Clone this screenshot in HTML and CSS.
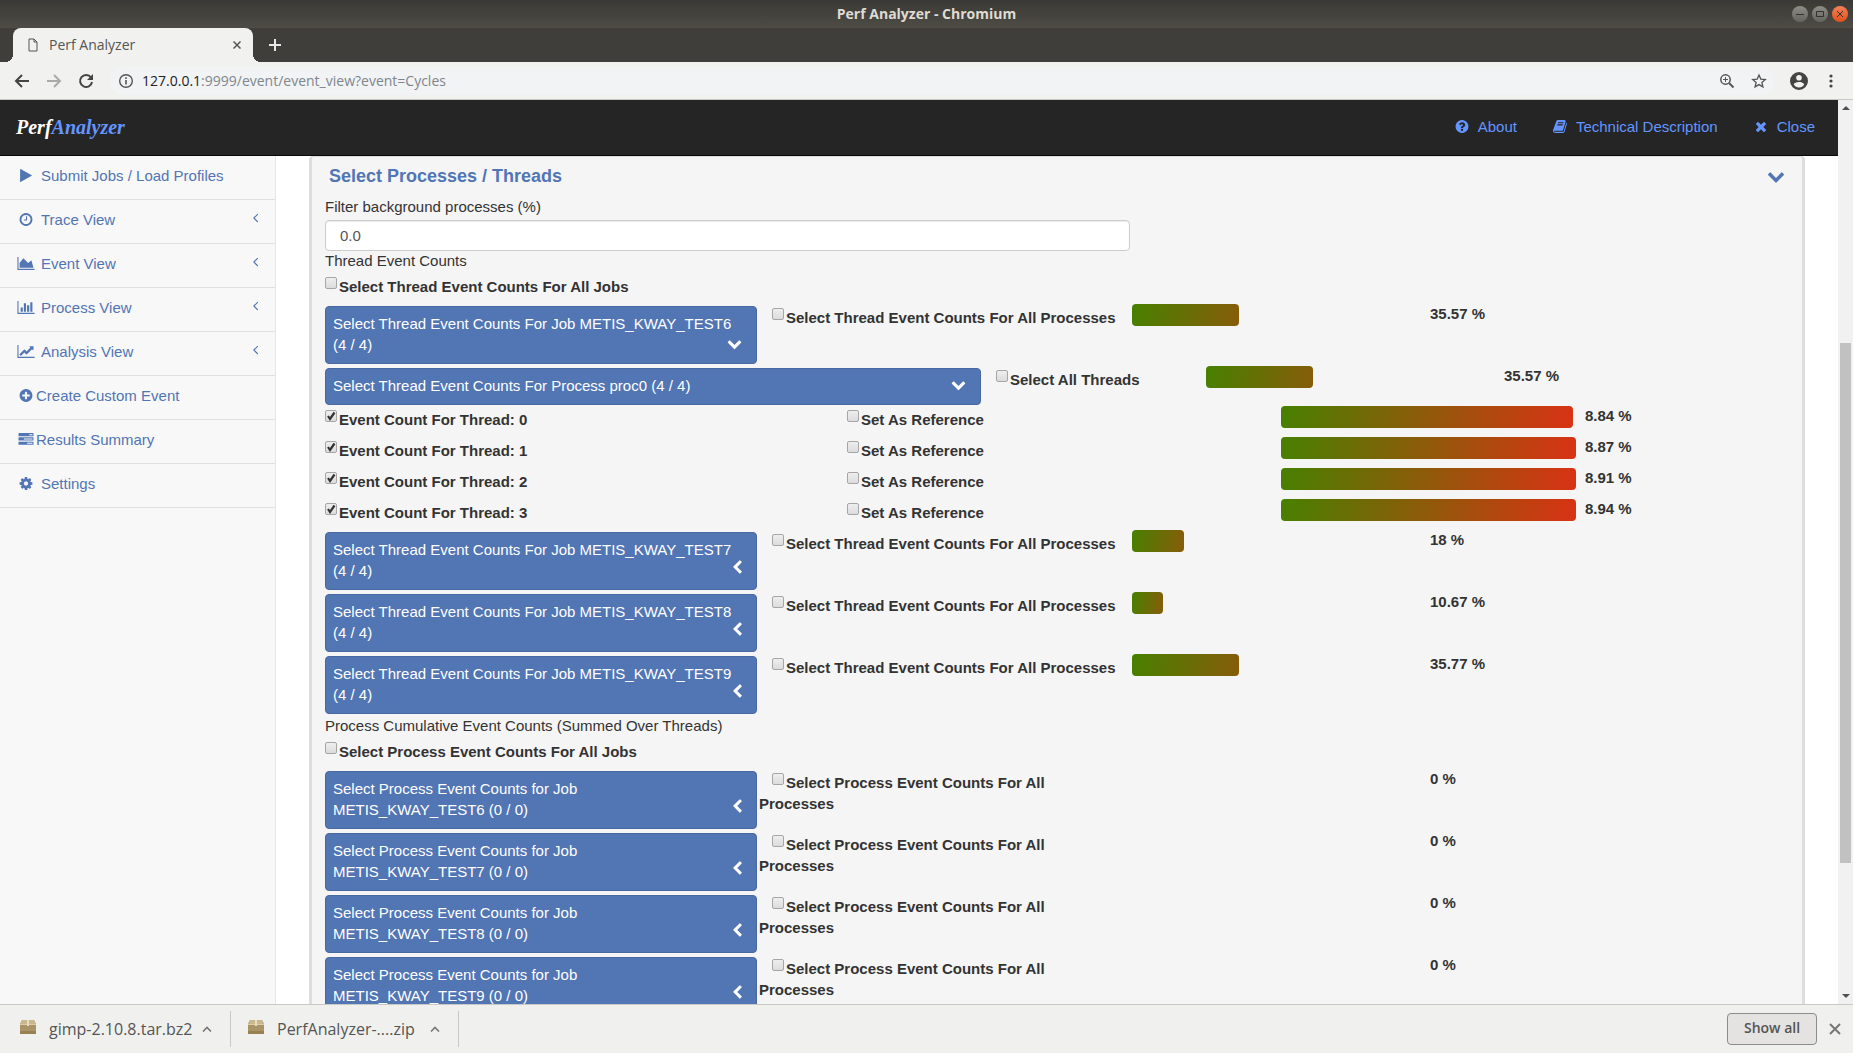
FILE: index.html
```html
<!DOCTYPE html>
<html lang="en">
<head>
<meta charset="utf-8">
<title>Perf Analyzer</title>
<link rel="stylesheet" href="styles.css">
</head>
<body>
<svg class="sprite" aria-hidden="true">
  <symbol id="play" viewBox="0 0 1792 1792"><path d="M1576 927l-1328 738q-23 13-39.500 3t-16.500-36v-1472q0-26 16.500-36t39.500 3l1328 738q23 13 23 31t-23 31z"/></symbol>
  <symbol id="question" viewBox="0 0 1792 1792"><path d="M1024 1376v-192q0-14-9-23t-23-9h-192q-14 0-23 9t-9 23v192q0 14 9 23t23 9h192q14 0 23-9t9-23zm256-672q0-88-55.500-163t-138.500-116-170-41q-243 0-371 213-15 24 8 42l132 100q7 6 19 6 16 0 25-12 53-68 86-92 34-24 86-24 48 0 85.500 26t37.500 59q0 38-20 61t-68 45q-63 28-115.500 86.500t-52.500 125.500v36q0 14 9 23t23 9h192q14 0 23-9t9-23q0-19 21.500-49.500t54.500-49.500q32-18 49-28.500t46-35 44.500-48 28-60.500 12.500-81zm384 192q0 209-103 385.500t-279.500 279.500-385.500 103-385.500-103-279.500-279.500-103-385.500 103-385.500 279.500-279.500 385.500-103 385.500 103 279.500 279.500 103 385.500z"/></symbol>
  <symbol id="plus" viewBox="0 0 1792 1792"><path d="M1344 960v-128q0-26-19-45t-45-19h-256v-256q0-26-19-45t-45-19h-128q-26 0-45 19t-19 45v256h-256q-26 0-45 19t-19 45v128q0 26 19 45t45 19h256v256q0 26 19 45t45 19h128q26 0 45-19t19-45v-256h256q26 0 45-19t19-45zm320-64q0 209-103 385.500t-279.500 279.500-385.500 103-385.500-103-279.500-279.500-103-385.500 103-385.500 279.500-279.500 385.500-103 385.500 103 279.500 279.500 103 385.500z"/></symbol>
  <symbol id="clock" viewBox="0 0 1792 1792"><path d="M1024 544v448q0 14-9 23t-23 9h-320q-14 0-23-9t-9-23v-64q0-14 9-23t23-9h224v-352q0-14 9-23t23-9h64q14 0 23 9t9 23zm416 352q0-148-73-273t-198-198-273-73-273 73-198 198-73 273 73 273 198 198 273 73 273-73 198-198 73-273zm224 0q0 209-103 385.500t-279.500 279.500-385.500 103-385.500-103-279.500-279.500-103-385.500 103-385.500 279.500-279.500 385.500-103 385.500 103 279.500 279.500 103 385.500z"/></symbol>
  <symbol id="cog" viewBox="0 0 1792 1792"><path d="M1152 896q0-106-75-181t-181-75-181 75-75 181 75 181 181 75 181-75 75-181zm512-109v222q0 12-8 23t-20 13l-185 28q-19 54-39 91 35 50 107 138 10 12 10 25t-9 23q-27 37-99 108t-94 71q-12 0-26-9l-138-108q-44 23-91 38-16 136-29 186-7 28-36 28h-222q-14 0-24.500-8.500t-11.500-21.500l-28-184q-49-16-90-37l-141 107q-10 9-25 9-14 0-25-11-126-114-165-168-7-10-7-23 0-12 8-23 15-21 51-66.500t54-70.500q-27-50-41-99l-183-27q-13-2-21-12.500t-8-23.500v-222q0-12 8-23t19-13l186-28q14-46 39-92-40-57-107-138-10-12-10-24 0-10 9-23 26-36 98.500-107.500t94.500-71.500q13 0 26 10l138 107q44-23 91-38 16-136 29-186 7-28 36-28h222q14 0 24.500 8.500t11.500 21.500l28 184q49 16 90 37l142-107q9-9 24-9 13 0 25 10 129 119 165 170 7 8 7 22 0 12-8 23-15 21-51 66.500t-54 70.500q26 50 41 98l183 28q13 2 21 12.500t8 23.500z"/></symbol>
  <symbol id="times" viewBox="0 0 1792 1792"><path d="M1490 1322q0 40-28 68l-136 136q-28 28-68 28t-68-28l-294-294-294 294q-28 28-68 28t-68-28l-136-136q-28-28-28-68t28-68l294-294-294-294q-28-28-28-68t28-68l136-136q28-28 68-28t68 28l294 294 294-294q28-28 68-28t68 28l136 136q28 28 28 68t-28 68l-294 294 294 294q28 28 28 68z"/></symbol>
  <symbol id="book" viewBox="0 0 1792 1792"><path d="M1703 478q40 57 18 129l-275 906q-19 64-76.500 107.500t-122.500 43.500h-923q-77 0-148.500-53.500t-99.500-131.500q-24-67-2-127 0-4 3-27t4-37q1-8-3-21.500t-3-19.500q2-11 8-21t16.500-23.500 16.500-23.500q23-38 45-91.500t30-91.500q3-10 .5-30t-.5-28q3-11 17-28t17-23q21-36 42-92t25-90q1-9-2.500-32t.5-28q4-13 22-30.500t22-22.500q19-26 42.500-84.500t27.500-96.500q1-8-3-25.500t-2-26.500q2-8 9-18t18-23 17-21q8-12 16.500-30.500t15-35 16-36 19.500-32 26.500-23.500 36-11.500 47.500 5.500l-1 3q38-9 51-9h761q74 0 114 56t18 130l-274 906q-36 119-71.500 153.500t-128.500 34.500h-869q-27 0-38 15-11 16-1 43 24 70 144 70h923q29 0 56-15.500t35-41.500l300-987q7-22 5-57 38 15 59 43zm-1064 2q-4 13 2 22.500t20 9.500h608q13 0 25.500-9.500t16.500-22.500l21-64q4-13-2-22.500t-20-9.500h-608q-13 0-25.500 9.500t-16.500 22.500zm-83 256q-4 13 2 22.500t20 9.500h608q13 0 25.500-9.500t16.500-22.500l21-64q4-13-2-22.500t-20-9.500h-608q-13 0-25.500 9.500t-16.500 22.500z"/></symbol>
  <symbol id="area" viewBox="0 0 2048 1792"><path d="M2048 1536v128h-2048v-1536h128v1408h1920zm-384-1024l256 896h-1664v-576l448-576 576 576z"/></symbol>
  <symbol id="bars" viewBox="0 0 2048 1792"><path d="M640 896v512h-256v-512h256zm384-512v1024h-256v-1024h256zm1024 1152v128h-2048v-1536h128v1408h1920zm-640-896v768h-256v-768h256zm384-384v1152h-256v-1152h256z"/></symbol>
  <symbol id="line" viewBox="0 0 2048 1792"><path d="M2048 1536v128h-2048v-1536h128v1408h1920zm-128-1248v435q0 21-19.500 29.500t-35.500-7.500l-121-121-633 633q-10 10-23 10t-23-10l-233-233-416 416-192-192 585-585q10-10 23-10t23 10l233 233 464-464-121-121q-16-16-7.500-35.500t29.500-19.500h435q14 0 23 9t9 23z"/></symbol>
  <symbol id="tasks" viewBox="0 0 1792 1792"><path d="M1024 1408h640v-128h-640v128zm-384-512h1024v-128h-1024v128zm640-512h384v-128h-384v128zm512 832v256q0 26-19 45t-45 19h-1664q-26 0-45-19t-19-45v-256q0-26 19-45t45-19h1664q26 0 45 19t19 45zm0-512v256q0 26-19 45t-45 19h-1664q-26 0-45-19t-19-45v-256q0-26 19-45t45-19h1664q26 0 45 19t19 45zm0-512v256q0 26-19 45t-45 19h-1664q-26 0-45-19t-19-45v-256q0-26 19-45t45-19h1664q26 0 45 19t19 45z"/></symbol>
  <symbol id="down" viewBox="0 0 1792 1792"><path d="M1683 808l-742 741q-19 19-45 19t-45-19l-742-741q-19-19-19-45.500t19-45.500l166-165q19-19 45-19t45 19l531 531 531-531q19-19 45-19t45 19l166 165q19 19 19 45.500t-19 45.500z"/></symbol>
  <symbol id="left" viewBox="384 0 1088 1792"><path d="M1427 301l-531 531 531 531q19 19 19 45t-19 45l-166 166q-19 19-45 19t-45-19l-742-742q-19-19-19-45t19-45l742-742q19-19 45-19t45 19l166 166q19 19 19 45t-19 45z"/></symbol>
  <symbol id="angle" viewBox="512 0 768 1792"><path d="M1203 544q0 13-10 23l-393 393 393 393q10 10 10 23t-10 23l-50 50q-10 10-23 10t-23-10l-466-466q-10-10-10-23t10-23l466-466q10-10 23-10t23 10l50 50q10 10 10 23z"/></symbol>
  <symbol id="package" viewBox="0 0 16 14"><path d="M2 0h12l2 4v9.500H0V4z" fill="#a99468"/><path d="M2 0h12l2 4H0z" fill="#c9b78d"/><path d="M0 4h16v1H0z" fill="#dccda8"/><path d="M0 11h16v3H0z" fill="#978052"/><path d="M7 0h2v6H7z" fill="#e6dcc2"/></symbol>
  <symbol id="caret" viewBox="0 0 10 6"><path d="M1 5.500l4-4 4 4" fill="none" stroke="#777" stroke-width="1.600"/></symbol>
</svg>

<header class="titlebar">
  <h1 class="window-title">Perf Analyzer - Chromium</h1>
  <div class="window-buttons">
    <button class="win" aria-label="Minimize"><svg viewBox="0 0 16 16"><path d="M4 8.500h8"/></svg></button>
    <button class="win" aria-label="Maximize"><svg viewBox="0 0 16 16"><path d="M4.500 5.500h7v5h-7z"/></svg></button>
    <button class="win win-close" aria-label="Close window"><svg viewBox="0 0 16 16"><path d="M5 5l6 6M11 5l-6 6"/></svg></button>
  </div>
</header>

<div class="tabstrip">
  <div class="tab">
    <svg class="tab-page" viewBox="0 0 10 14"><path d="M1 1h5l3 3v9H1zM6 1v3h3" fill="none" stroke="#555"/></svg>
    <span class="tab-title">Perf Analyzer</span>
    <button class="plain" aria-label="Close tab"><svg class="i8" viewBox="0 0 8 8"><path d="M.5 .5l7 7M7.500 .5l-7 7" stroke="#555" stroke-width="1.500"/></svg></button>
  </div>
  <button class="plain new-tab" aria-label="New tab"><svg class="i12" viewBox="0 0 12 12"><path d="M6 0v12M0 6h12" stroke="#e8e8e6" stroke-width="2"/></svg></button>
</div>

<div class="toolbar">
  <button class="plain" aria-label="Back"><svg class="i16" viewBox="0 0 16 16"><path d="M15 8H2M8 2L2 8l6 6" fill="none" stroke="#444" stroke-width="2"/></svg></button>
  <button class="plain" aria-label="Forward"><svg class="i16" viewBox="0 0 16 16"><path d="M1 8h13M8 2l6 6-6 6" fill="none" stroke="#aaa" stroke-width="2"/></svg></button>
  <button class="plain" aria-label="Reload"><svg class="i16" viewBox="0 0 16 16"><path d="M13 4.500A6 6 0 1 0 14 9" fill="none" stroke="#444" stroke-width="2"/><path d="M15 1v6H9z" fill="#444"/></svg></button>
  <div class="omnibox">
    <svg class="i16" viewBox="0 0 16 16"><circle cx="8" cy="8" r="6.300" fill="none" stroke="#555" stroke-width="1.400"/><path d="M8 7v4.500M8 4.300v1.600" stroke="#555" stroke-width="1.600"/></svg>
    <div class="url" role="textbox" aria-label="Address" contenteditable="true" spellcheck="false">127.0.0.1<span class="url-rest">:9999/event/event_view?event=Cycles</span></div>
    <button class="plain" aria-label="Zoom"><svg class="i16" viewBox="0 0 16 16"><circle cx="6.500" cy="6.500" r="4.700" fill="none" stroke="#555" stroke-width="1.500"/><path d="M10 10l4.500 4.500" stroke="#555" stroke-width="2"/><path d="M6.500 4v5M4 6.500h5" stroke="#555"/></svg></button>
    <button class="plain" aria-label="Bookmark"><svg class="i16" viewBox="0 0 16 16"><path d="M8 2l1.800 4.100 4.500.4-3.400 3 1 4.400L8 11.600l-3.900 2.300 1-4.400-3.400-3 4.500-.4z" fill="none" stroke="#555" stroke-width="1.300"/></svg></button>
  </div>
  <div class="toolbar-end">
    <button class="plain" aria-label="Profile"><svg class="i18" viewBox="0 0 18 18"><path fill-rule="evenodd" d="M9 0a9 9 0 1 0 0 18A9 9 0 0 0 9 0zm0 3a2.800 2.800 0 1 1 0 5.600A2.800 2.800 0 0 1 9 3zm0 12.500a6 6 0 0 1-5.200-3c0-1.700 3.500-2.600 5.200-2.600s5.200.9 5.200 2.600a6 6 0 0 1-5.200 3z" fill="#444"/></svg></button>
    <button class="plain" aria-label="Menu"><svg class="dots" viewBox="0 0 4 14"><g fill="#444"><circle cx="2" cy="2" r="1.600"/><circle cx="2" cy="7" r="1.600"/><circle cx="2" cy="12" r="1.600"/></g></svg></button>
  </div>
</div>

<div class="viewport">
  <div class="page">
    <nav class="navbar">
      <a class="brand" href="#">Perf<span class="brand-accent">Analyzer</span></a>
      <div class="nav-links">
        <a href="#"><svg class="icon"><use href="#question"/></svg>About</a>
        <a href="#"><svg class="icon"><use href="#book"/></svg>Technical Description</a>
        <a href="#"><svg class="icon"><use href="#times"/></svg>Close</a>
      </div>
    </nav>
    <div class="columns">
      <aside class="sidebar">
        <a class="item" href="#"><svg class="icon side-icon"><use href="#play"/></svg><span>Submit Jobs / Load Profiles</span></a>
        <a class="item" href="#"><svg class="icon side-icon"><use href="#clock"/></svg><span>Trace View</span><svg class="angle"><use href="#angle"/></svg></a>
        <a class="item" href="#"><svg class="icon side-icon"><use href="#area"/></svg><span>Event View</span><svg class="angle"><use href="#angle"/></svg></a>
        <a class="item" href="#"><svg class="icon side-icon"><use href="#bars"/></svg><span>Process View</span><svg class="angle"><use href="#angle"/></svg></a>
        <a class="item" href="#"><svg class="icon side-icon"><use href="#line"/></svg><span>Analysis View</span><svg class="angle"><use href="#angle"/></svg></a>
        <a class="item tight" href="#"><svg class="icon side-icon"><use href="#plus"/></svg><span>Create Custom Event</span></a>
        <a class="item tight" href="#"><svg class="icon side-icon"><use href="#tasks"/></svg><span>Results Summary</span></a>
        <a class="item" href="#"><svg class="icon side-icon"><use href="#cog"/></svg><span>Settings</span></a>
      </aside>
      <main class="main">
        <section class="panel">
          <div class="panel-head">
            <h2 class="panel-title">Select Processes / Threads</h2>
            <button class="plain" aria-label="Collapse"><svg class="panel-chevron"><use href="#down"/></svg></button>
          </div>
          <label class="text" for="filter">Filter background processes (%)</label>
          <input class="filter" id="filter" type="text" value="0.0">

          <div class="text">Thread Event Counts</div>
          <div class="row all"><label class="check"><input type="checkbox">Select Thread Event Counts For All Jobs</label></div>

          <div class="row job">
            <button class="select">Select Thread Event Counts For Job METIS_KWAY_TEST6<br>(4 / 4)<svg class="chev-down"><use href="#down"/></svg></button>
            <label class="check inset"><input type="checkbox">Select Thread Event Counts For All Processes</label>
            <div class="track"><div class="bar part" style="width:36%"></div></div>
            <div class="pct">35.57 %</div>
          </div>
          <div class="row process">
            <button class="select">Select Thread Event Counts For Process proc0 (4 / 4)<svg class="chev-down"><use href="#down"/></svg></button>
            <label class="check inset"><input type="checkbox">Select All Threads</label>
            <div class="track"><div class="bar part" style="width:36%"></div></div>
            <div class="pct">35.57 %</div>
          </div>
          <div class="row thread">
            <label class="check"><input type="checkbox" checked>Event Count For Thread: 0</label>
            <label class="check"><input type="checkbox">Set As Reference</label>
            <div class="track"><div class="bar" style="width:96%"></div></div>
            <div class="pct">8.84 %</div>
          </div>
          <div class="row thread">
            <label class="check"><input type="checkbox" checked>Event Count For Thread: 1</label>
            <label class="check"><input type="checkbox">Set As Reference</label>
            <div class="track"><div class="bar" style="width:97%"></div></div>
            <div class="pct">8.87 %</div>
          </div>
          <div class="row thread">
            <label class="check"><input type="checkbox" checked>Event Count For Thread: 2</label>
            <label class="check"><input type="checkbox">Set As Reference</label>
            <div class="track"><div class="bar" style="width:97%"></div></div>
            <div class="pct">8.91 %</div>
          </div>
          <div class="row thread">
            <label class="check"><input type="checkbox" checked>Event Count For Thread: 3</label>
            <label class="check"><input type="checkbox">Set As Reference</label>
            <div class="track"><div class="bar" style="width:97%"></div></div>
            <div class="pct">8.94 %</div>
          </div>
          <div class="row job">
            <button class="select">Select Thread Event Counts For Job METIS_KWAY_TEST7<br>(4 / 4)<svg class="chev-left"><use href="#left"/></svg></button>
            <label class="check inset"><input type="checkbox">Select Thread Event Counts For All Processes</label>
            <div class="track"><div class="bar part" style="width:17.5%"></div></div>
            <div class="pct">18 %</div>
          </div>
          <div class="row job">
            <button class="select">Select Thread Event Counts For Job METIS_KWAY_TEST8<br>(4 / 4)<svg class="chev-left"><use href="#left"/></svg></button>
            <label class="check inset"><input type="checkbox">Select Thread Event Counts For All Processes</label>
            <div class="track"><div class="bar part" style="width:10.5%"></div></div>
            <div class="pct">10.67 %</div>
          </div>
          <div class="row job">
            <button class="select">Select Thread Event Counts For Job METIS_KWAY_TEST9<br>(4 / 4)<svg class="chev-left"><use href="#left"/></svg></button>
            <label class="check inset"><input type="checkbox">Select Thread Event Counts For All Processes</label>
            <div class="track"><div class="bar part" style="width:36%"></div></div>
            <div class="pct">35.77 %</div>
          </div>

          <div class="text">Process Cumulative Event Counts (Summed Over Threads)</div>
          <div class="row all"><label class="check"><input type="checkbox">Select Process Event Counts For All Jobs</label></div>
          <div class="row job">
            <button class="select">Select Process Event Counts for Job<br>METIS_KWAY_TEST6 (0 / 0)<svg class="chev-left"><use href="#left"/></svg></button>
            <label class="check inset"><input type="checkbox">Select Process Event Counts For All<br>Processes</label>
            <div class="track"></div>
            <div class="pct">0 %</div>
          </div>
          <div class="row job">
            <button class="select">Select Process Event Counts for Job<br>METIS_KWAY_TEST7 (0 / 0)<svg class="chev-left"><use href="#left"/></svg></button>
            <label class="check inset"><input type="checkbox">Select Process Event Counts For All<br>Processes</label>
            <div class="track"></div>
            <div class="pct">0 %</div>
          </div>
          <div class="row job">
            <button class="select">Select Process Event Counts for Job<br>METIS_KWAY_TEST8 (0 / 0)<svg class="chev-left"><use href="#left"/></svg></button>
            <label class="check inset"><input type="checkbox">Select Process Event Counts For All<br>Processes</label>
            <div class="track"></div>
            <div class="pct">0 %</div>
          </div>
          <div class="row job">
            <button class="select">Select Process Event Counts for Job<br>METIS_KWAY_TEST9 (0 / 0)<svg class="chev-left"><use href="#left"/></svg></button>
            <label class="check inset"><input type="checkbox">Select Process Event Counts For All<br>Processes</label>
            <div class="track"></div>
            <div class="pct">0 %</div>
          </div>
        </section>
      </main>
    </div>
  </div>
  <div class="scrollbar">
    <svg class="arrow" viewBox="0 0 8 4"><path d="M4 0l4 4H0z"/></svg>
    <div class="rail"><div class="thumb"></div></div>
    <svg class="arrow" viewBox="0 0 8 4"><path d="M0 0h8L4 4z"/></svg>
  </div>
</div>

<footer class="downloads">
  <div class="download"><svg class="package"><use href="#package"/></svg><span>gimp-2.10.8.tar.bz2</span><button class="plain" aria-label="Options"><svg class="caret"><use href="#caret"/></svg></button></div>
  <div class="download"><svg class="package"><use href="#package"/></svg><span>PerfAnalyzer-....zip</span><button class="plain" aria-label="Options"><svg class="caret"><use href="#caret"/></svg></button></div>
  <div class="downloads-end">
    <button class="show-all">Show all</button>
    <button class="plain" aria-label="Close downloads"><svg class="i12" viewBox="0 0 12 12"><path d="M1 1l10 10M11 1L1 11" stroke="#777" stroke-width="2"/></svg></button>
  </div>
</footer>
</body>
</html>
```
FILE: styles.css
```css
* { box-sizing: border-box; }

body {
  display: flex;
  flex-direction: column;
  height: 100vh;
  margin: 0;
  overflow: hidden;
  font: 15px/21px "Liberation Sans", Arial, sans-serif;
  color: #333;
  background: #fff;
}

svg { display: block; flex: none; }
a { color: inherit; text-decoration: none; }
.sprite { display: none; }
.i8 { width: 8px; height: 8px; }
.i12 { width: 12px; height: 12px; }
.i16 { width: 16px; height: 16px; }
.i18 { width: 18px; height: 18px; }
.dots { width: 4px; height: 14px; }
.plain { padding: 0; border: 0; background: none; }

/* Window frame */
.titlebar {
  display: grid;
  grid-template-columns: 1fr auto 1fr;
  align-items: center;
  flex: none;
  height: 28px;
  padding: 0 5px;
  background: linear-gradient(#3a3935, #4e4c45);
}
.window-title {
  grid-column: 2;
  margin: 0;
  font: bold 14px/20px "Open Sans", "Noto Sans", sans-serif;
  color: #dfdbd2;
}
.window-buttons { display: flex; justify-content: flex-end; gap: 4px; }
.win {
  width: 16px;
  height: 16px;
  padding: 0;
  border: 0;
  border-radius: 50%;
  background: linear-gradient(#8d8c85, #65645e);
}
.win svg { width: 16px; height: 16px; fill: none; stroke: #33322e; }
.win-close { background: linear-gradient(#f58059, #e0501c); }

.tabstrip {
  display: flex;
  align-items: center;
  flex: none;
  height: 34px;
  padding-left: 13px;
  background: #3f3e3a;
}
.tab {
  position: relative;
  display: flex;
  align-items: center;
  width: 240px;
  height: 34px;
  padding: 0 12px 0 15px;
  border-radius: 8px 8px 0 0;
  background: #f1f1ef;
}
.tab::before,
.tab::after {
  content: "";
  position: absolute;
  bottom: 0;
  width: 8px;
  height: 8px;
}
.tab::before { right: 100%; background: radial-gradient(circle at 0 0, transparent 8px, #f1f1ef 8px); }
.tab::after { left: 100%; background: radial-gradient(circle at 100% 0, transparent 8px, #f1f1ef 8px); }
.tab-page { width: 10px; height: 14px; margin-right: 11px; }
.tab-title {
  flex: 1;
  font: 14px/20px "Open Sans", "Noto Sans", sans-serif;
  color: #555;
}
.new-tab { margin-left: 16px; }

.toolbar {
  display: flex;
  align-items: center;
  flex: none;
  gap: 16px;
  height: 38px;
  padding: 0 20px 0 14px;
  border-bottom: 1px solid #c6c8c4;
  background: #f1f1ef;
}
.toolbar-end { display: flex; align-items: center; gap: 21px; }
.omnibox {
  display: flex;
  align-items: center;
  flex: 1;
  gap: 16px;
  height: 28px;
  padding: 0 7px 0 8px;
  border-radius: 14px;
  background: #f1f3f5;
}
.url {
  flex: 1;
  margin-left: -8px;
  font: 14px/20px "Open Sans", "Noto Sans", sans-serif;
  color: #222;
}
.url-rest { color: #80868b; }

/* Page */
.viewport { display: flex; flex: 1; min-height: 0; }
.page { display: flex; flex: 1; flex-direction: column; min-width: 0; overflow: hidden; }
.navbar {
  display: flex;
  align-items: center;
  justify-content: space-between;
  flex: none;
  height: 56px;
  padding: 0 23px 2px 16px;
  border-bottom: 1px solid #080808;
  background: #252525;
  color: #6495ff;
}
.brand { font: italic bold 20px/24px "Liberation Serif", "Times New Roman", serif; color: #fff; }
.brand-accent { color: #6495ff; }
.nav-links { display: flex; gap: 35px; }
.nav-links a { display: flex; align-items: center; gap: 8px; }
.icon { width: 16px; height: 15px; fill: currentColor; }

.columns { display: flex; flex: 1; min-height: 0; }
.sidebar {
  flex: none;
  width: 276px;
  border-right: 1px solid #e7e7e7;
  background: #f8f8f8;
  color: #5275b4;
}
.item {
  display: flex;
  align-items: center;
  gap: 6px;
  height: 44px;
  padding: 0 16px 5px 17px;
  border-bottom: 1px solid #e0e0e0;
}
.tight { gap: 1px; }
.side-icon { width: 18px; }
.angle { width: 7px; height: 15px; margin-left: auto; margin-bottom: 3px; fill: currentColor; }

.main { flex: 1; min-width: 0; padding: 0 33px; }
.panel {
  padding-left: 13px;
  border: 3px solid #ddd;
  border-top-width: 1px;
  border-radius: 4px 4px 0 0;
  background: #f5f5f5;
}
.panel-head {
  display: flex;
  align-items: center;
  justify-content: space-between;
  height: 40px;
  padding: 0 17px 2px 4px;
}
.panel-title { margin: 0; font-size: 18px; line-height: 24px; color: #5275b4; }
.panel-chevron { width: 18px; height: 18px; fill: #5275b4; }
.text { display: block; line-height: 20px; }
.filter {
  display: block;
  width: 805px;
  max-width: 100%;
  height: 31px;
  margin-top: 3px;
  padding: 0 14px;
  border: 1px solid #ccc;
  border-radius: 4px;
  background: #fff;
  box-shadow: inset 0 1px 1px rgba(0, 0, 0, 0.08);
  font: inherit;
  color: #555;
}

.row { display: grid; align-items: start; min-height: 31px; }
.all { min-height: 33px; padding-top: 2px; }
.job { grid-template-columns: 434fr 373fr 298fr 372fr; min-height: 62px; }
.process { grid-template-columns: 658fr 223fr 298fr 298fr; min-height: 40px; }
.thread { grid-template-columns: 522fr 434fr 304fr 217fr; }

.select {
  margin: 2px 2px 0 0;
  padding: 6px 14px 8px 7px;
  border: 1px solid #4868a2;
  border-radius: 4px;
  background: #5275b4;
  font: inherit;
  color: #fff;
  text-align: left;
}
.chev-down { float: right; width: 15px; height: 15px; margin-top: 2px; fill: #fff; }
.chev-left { float: right; width: 9px; height: 15px; fill: #fff; }

.check { display: block; margin-top: 3px; font-weight: bold; }
.check input {
  appearance: none;
  float: left;
  width: 12px;
  height: 12px;
  margin: 1px 2px 8px 0;
  border: 1px solid #a6a6a6;
  border-radius: 2px;
  background: linear-gradient(#eee, #dcdcdc);
}
.check input:checked {
  background:
    url("data:image/svg+xml,%3Csvg xmlns='http://www.w3.org/2000/svg' viewBox='0 0 10 10'%3E%3Cpath d='M2 5l2 3 4.500-6.500' fill='none' stroke='%23333' stroke-width='2.200'/%3E%3C/svg%3E"),
    linear-gradient(#eee, #dcdcdc);
}
.inset input { margin-left: 13px; }

.bar { height: 22px; border-radius: 4px; background: linear-gradient(100deg, #478000, #d93214); }
.part { background: linear-gradient(100deg, #478000, #875c0a); }
.pct { font-weight: bold; line-height: 20px; }

.scrollbar {
  display: flex;
  flex-direction: column;
  align-items: center;
  flex: none;
  gap: 6px;
  width: 15px;
  padding: 6px 0;
  background: #f1f1f1;
}
.arrow { width: 8px; height: 4px; fill: #505050; }
.rail { display: grid; grid-template-rows: 227fr 520fr 125fr; flex: 1; width: 11px; }
.thumb { grid-row: 2; background: #c1c1c1; }

/* Downloads shelf */
.downloads {
  display: flex;
  align-items: center;
  flex: none;
  height: 49px;
  padding-left: 3px;
  border-top: 1px solid #c8c8c6;
  background: #f0f0ee;
  font: 16px/22px "Open Sans", "Noto Sans", sans-serif;
  color: #555;
}
.download {
  display: flex;
  align-items: center;
  gap: 13px;
  height: 36px;
  padding: 0 18px 0 17px;
  border-right: 1px solid #c8c8c6;
}
.download span { width: 140px; white-space: nowrap; }
.package { width: 16px; height: 14px; margin-bottom: 4px; }
.caret { width: 10px; height: 6px; }
.downloads-end { display: flex; align-items: center; gap: 12px; margin-left: auto; padding-right: 12px; }
.show-all {
  width: 90px;
  height: 32px;
  padding: 0 0 2px;
  border: 1px solid #8c8c88;
  border-radius: 4px;
  background: #e4e3e1;
  font: 600 14px/20px "Open Sans", "Noto Sans", sans-serif;
  color: #555;
}
```
